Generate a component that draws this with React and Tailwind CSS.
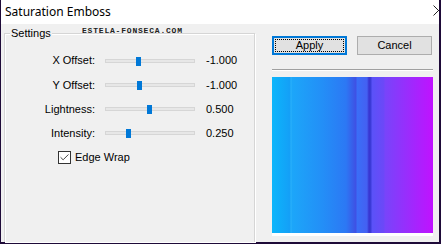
import { Check } from 'lucide-react'

const UI_FONT = { fontFamily: '"Liberation Sans", Arial, sans-serif' }

const SLIDERS = [
  { label: 'X Offset:', value: '-1.000', thumb: 31, h: 'h-[25px]' },
  { label: 'Y Offset:', value: '-1.000', thumb: 32, h: 'h-[24px]' },
  { label: 'Lightness:', value: '0.500', thumb: 42, h: 'h-[24px]' },
  { label: 'Intensity:', value: '0.250', thumb: 21, h: 'h-[24px]' },
]

// emboss preview colour stops, in px across the 161px preview
const STOPS = [
  [0, '#0cb6fb'], [18, '#149ff7'], [19, '#2cb2fa'], [20, '#1ca6f9'],
  [50, '#238ff7'], [74, '#2c78f4'], [84, '#3f50e4'], [85, '#3a6ef7'],
  [95, '#4460f2'], [97, '#3834d0'], [99, '#3c3cda'], [100, '#5a52f8'],
  [112, '#6c48f8'], [113, '#7844fa'], [161, '#c012ff'],
]

function Slider({ thumb }) {
  return (
    <div className="relative w-[90px] h-[4px] bg-[#e7e7e7] border border-[#d6d6d6]">
      <div
        className="absolute top-[-3px] w-[5px] h-[9px] bg-[#0078d7]"
        style={{ left: thumb - 1 }}
      />
    </div>
  )
}

function Preview() {
  return (
    <svg width="161" height="156" viewBox="0 0 161 156" className="block">
      <defs>
        <linearGradient id="base" x1="0" x2="1" y1="0" y2="0">
          {STOPS.map(([o, c]) => (
            <stop key={o} offset={o / 161} stopColor={c} />
          ))}
        </linearGradient>
      </defs>
      <rect x="0" y="0" width="161" height="156" fill="url(#base)" />
    </svg>
  )
}

export default function App() {
  return (
    <div className="w-[441px] h-[244px] bg-[#1e0a38] pl-[1px] pr-[2px] pb-[2px] flex flex-col" style={UI_FONT}>
      {/* Title bar */}
      <div className="relative h-[24px] bg-white flex items-center pl-[4px] overflow-hidden">
        <span className="text-[12px] text-black" style={{ fontFamily: '"Noto Sans", "Liberation Sans", sans-serif' }}>
          Saturation Emboss
        </span>
        <svg width="6" height="11" viewBox="0 0 6 11" className="absolute right-0 top-[5px]">
          <path d="M0.5 0.5 L10.5 10.5 M0.5 10.5 L10.5 0.5" stroke="#222" strokeWidth="1" />
        </svg>
      </div>

      {/* Body */}
      <div className="flex-1 bg-[#f0f0f0] flex">
        {/* Settings group */}
        <div className="relative mt-[9px] ml-[3px] w-[251px] border-t border-l border-r border-[#d5d5d5] shadow-[1px_1px_0_#fff,inset_1px_1px_0_#fff] pt-[14px]">
          <span className="absolute left-[5px] top-[-8px] px-[1px] bg-[#f0f0f0] text-[11px] leading-[14px] text-black">
            Settings
          </span>
          <span
            className="absolute left-[77px] top-[-8px] text-[8px] leading-[10px] font-bold tracking-[0.8px] text-[#222]"
            style={{ fontFamily: '"Liberation Mono", "DejaVu Sans Mono", monospace' }}
          >
            ESTELA-FONSECA.COM
          </span>

          {SLIDERS.map(s => (
            <div key={s.label} className={`flex items-center ${s.h}`}>
              <span className="w-[90px] text-right text-[11px] text-black">{s.label}</span>
              <div className="ml-[10px]">
                <Slider thumb={s.thumb} />
              </div>
              <span className="ml-[11px] text-[11px] text-black">{s.value}</span>
            </div>
          ))}

          <div className="flex items-center h-[20px] mt-[2px] pl-[53px]">
            <div className="w-[13px] h-[13px] border border-[#333] bg-white flex items-center justify-center">
              <Check size={11} strokeWidth={2} color="#333" />
            </div>
            <span className="ml-[4px] text-[11px] text-black">Edge Wrap</span>
          </div>
        </div>

        {/* Right column */}
        <div className="ml-[17px] mt-[12px] w-[161px] flex flex-col">
          <div className="flex gap-[10px]">
            <button className="w-[75px] h-[19px] bg-[#e1e1e1] border border-[#0078d7] shadow-[inset_0_0_0_1px_#0078d7] p-[2px] text-[11px] text-black">
              <div className="w-full h-full border border-dotted border-black flex items-center justify-center leading-none">
                Apply
              </div>
            </button>
            <button className="w-[75px] h-[19px] bg-[#e1e1e1] border border-[#adadad] flex items-center justify-center text-[11px] text-black leading-none">
              Cancel
            </button>
          </div>

          <div className="mt-[14px] border-t border-[#a0a0a0] border-b border-b-white" />

          <div className="mt-[6px]">
            <Preview />
          </div>
          <div className="h-[3px] bg-white" />
        </div>
      </div>
    </div>
  )
}
